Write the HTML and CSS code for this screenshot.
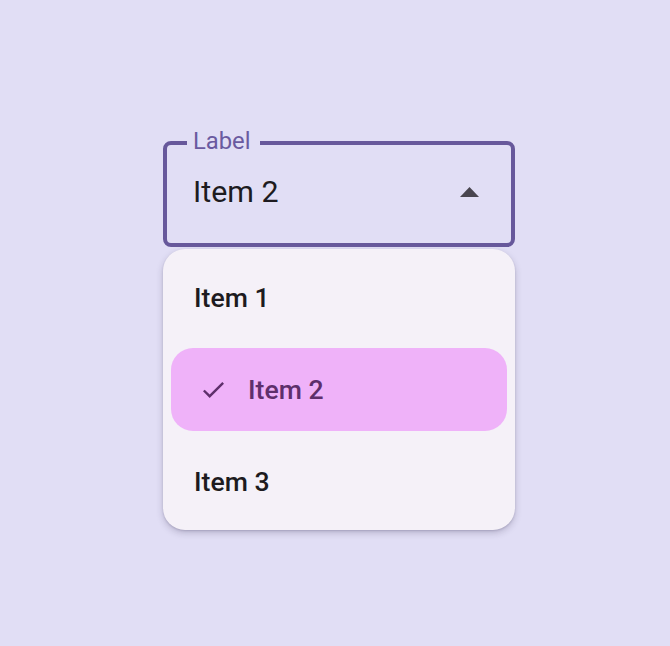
FILE: index.html
```html
<!DOCTYPE html>
<html>
<head>
<meta charset="utf-8">
<link rel="stylesheet" href="styles.css">
</head>
<body>
<div class="dropdown">
  <div class="field">
    <span class="label">Label</span>
    <span class="value">Item 2</span>
    <svg class="arrow" width="19" height="10" viewBox="0 0 19 10"><polygon points="9.5,0 19,10 0,10" fill="#49454f"/></svg>
  </div>
  <div class="menu">
    <div class="item">Item 1</div>
    <div class="item selected">
      <svg class="check" width="21" height="16" viewBox="3.41 5.59 17.59 13.41"><path d="M9 16.17L4.83 12l-1.42 1.41L9 19 21 7l-1.41-1.41z" fill="#5e2f6b"/></svg>
      <span>Item 2</span>
    </div>
    <div class="item">Item 3</div>
  </div>
</div>
</body>
</html>
```
FILE: styles.css
```css
html, body {
  margin: 0;
  padding: 0;
}
body {
  background: #e1def5;
  width: 670px;
  height: 646px;
  font-family: Roboto, "Noto Sans", sans-serif;
  overflow: hidden;
}
.dropdown {
  display: flex;
  flex-direction: column;
  gap: 2px;
  width: 352px;
  margin: 141px 0 0 163px;
}
.field {
  position: relative;
  box-sizing: border-box;
  height: 106px;
  border: 4px solid #67589b;
  border-radius: 8px;
  display: flex;
  align-items: center;
  padding: 0 32px 4px 26px;
}
.label {
  position: absolute;
  top: -16px;
  left: 20px;
  padding: 0 9px 0 6px;
  background: #e1def5;
  color: #6a5aa0;
  font-size: 23.8px;
  line-height: 24px;
}
.value {
  flex: 1;
  color: #1d1b20;
  font-size: 30.4px;
  line-height: 32px;
}
.arrow {
  display: block;
}
.menu {
  background: #f5f1f8;
  border-radius: 22px;
  box-shadow: 0 3px 7px rgba(40, 30, 70, 0.22), 0 1px 2px rgba(40, 30, 70, 0.16);
  padding: 7px 8px;
  display: flex;
  flex-direction: column;
  gap: 9px;
}
.item {
  height: 83px;
  display: flex;
  align-items: center;
  padding-left: 23px;
  font-size: 26.6px;
  font-weight: 500;
  color: #1d1b20;
  border-radius: 22px;
}
.selected {
  background: #efb2f9;
  color: #5e2f6b;
  padding-left: 32px;
}
.check {
  display: block;
  margin-right: 24px;
}
```
